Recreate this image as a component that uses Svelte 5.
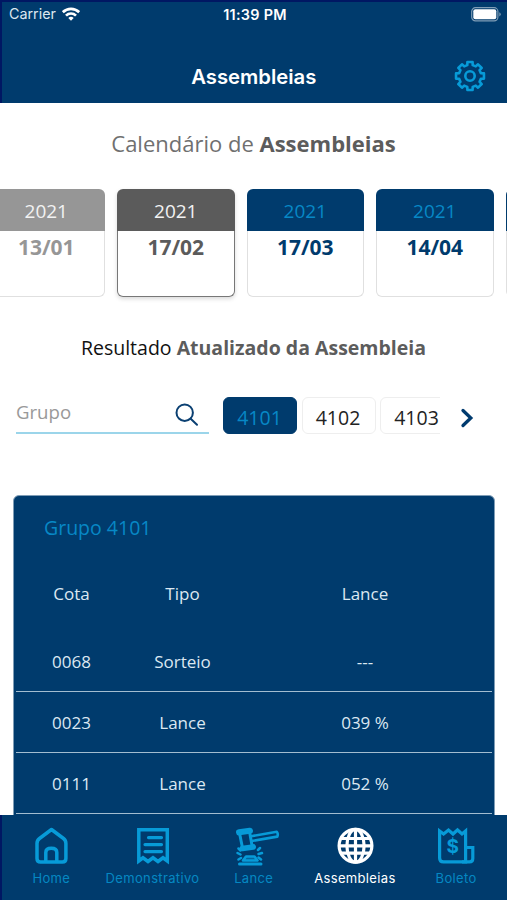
<script lang="ts">
  type Meeting = { year?: number; day?: string; state: "past" | "current" | "next" };

  // the last card only peeks in from the right edge
  const meetings: Meeting[] = [
    { year: 2021, day: "13/01", state: "past" },
    { year: 2021, day: "17/02", state: "current" },
    { year: 2021, day: "17/03", state: "next" },
    { year: 2021, day: "14/04", state: "next" },
    { state: "next" },
  ];

  const groups = ["4101", "4102", "4103"];

  const results = [
    { cota: "0068", tipo: "Sorteio", lance: "---" },
    { cota: "0023", tipo: "Lance", lance: "039 %" },
    { cota: "0111", tipo: "Lance", lance: "052 %" },
  ];

  const tabs = ["Home", "Demonstrativo", "Lance", "Assembleias", "Boleto"];

  let activeGroup = $state("4101");
  let activeTab = $state("Assembleias");
  let search = $state("");

  // eight-toothed gear outline around 0,0
  function gearPath() {
    const pts: string[] = [];
    for (let i = 0; i < 8; i++) {
      const steps = [[-14, 11.2], [-10.5, 14.2], [10.5, 14.2], [14, 11.2]];
      for (const [deg, r] of steps) {
        const a = ((i * 45 + deg) * Math.PI) / 180;
        pts.push(`${(Math.sin(a) * r).toFixed(2)} ${(-Math.cos(a) * r).toFixed(2)}`);
      }
    }
    return `M${pts.join("L")}Z`;
  }
</script>

<div class="screen">
  <header class="header">
    <div class="status">
      <span class="carrier">
        Carrier
        <svg width="18" height="14" viewBox="0 0 18 14" fill="none" stroke="#fff" stroke-width="2.7">
          <path d="M.8 5.200C5.500 .7 12.500 .7 17.200 5.200" />
          <path d="M4 8.600C6.800 5.800 11.200 5.800 14 8.600" />
          <path d="M6.300 10.900C7.900 9.400 10.100 9.400 11.700 10.900L9 13.700Z" fill="#fff" stroke="none" />
        </svg>
      </span>
      <span class="time">11:39 PM</span>
      <span class="battery">
        <svg width="30" height="15" viewBox="0 0 30 15">
          <rect x=".7" y=".7" width="26.200" height="13.200" rx="3.800" fill="none" stroke="#7f9db6" stroke-width="1.200" />
          <rect x="2.300" y="2.300" width="23" height="10" rx="2" fill="#fff" />
          <path d="M28.300 5.200v4.200q1.400-.7 1.400-2.100t-1.400-2.100Z" fill="#7f9db6" />
        </svg>
      </span>
    </div>
    <div class="title-bar">
      <h1>Assembleias</h1>
      <button class="settings" aria-label="Configurações">
        <svg width="32" height="32" viewBox="-16 -16 32 32" fill="none" stroke="#079bd8" stroke-width="2.600" stroke-linejoin="round">
          <path d={gearPath()} />
          <circle r="4.700" />
        </svg>
      </button>
    </div>
  </header>

  <main>
    <h2 class="calendar-title">Calendário de <b>Assembleias</b></h2>

    <div class="calendar">
      {#each meetings as meeting}
        <div class="card {meeting.state}">
          <div class="year">{meeting.year ?? ""}</div>
          <div class="day">{meeting.day ?? ""}</div>
        </div>
      {/each}
    </div>

    <h2 class="result-title">Resultado <b>Atualizado da Assembleia</b></h2>

    <div class="filter">
      <label class="search">
        <input placeholder="Grupo" bind:value={search} />
        <svg width="24" height="24" viewBox="0 0 24 24" fill="none" stroke="#0b4072" stroke-width="2" stroke-linecap="round">
          <circle cx="9.700" cy="9.700" r="8.200" />
          <path d="M15.700 15.700l6.300 6.100" />
        </svg>
      </label>
      <div class="chips">
        {#each groups as group}
          <button class="chip" class:active={activeGroup === group} onclick={() => (activeGroup = group)}>
            {group}
          </button>
        {/each}
      </div>
      <button class="more" aria-label="Próximo">
        <svg width="14" height="20" viewBox="0 0 14 20" fill="none" stroke="#003b6f" stroke-width="3.300" stroke-linecap="round">
          <path d="M3 2.500l7.800 7.500L3 17.500" />
        </svg>
      </button>
    </div>

    <section class="panel">
      <h3>Grupo {activeGroup}</h3>
      <div class="row head">
        <span>Cota</span><span>Tipo</span><span>Lance</span>
      </div>
      {#each results as result}
        <div class="row">
          <span>{result.cota}</span><span>{result.tipo}</span><span>{result.lance}</span>
        </div>
      {/each}
    </section>
  </main>

  <nav class="tabs">
    {#each tabs as tab}
      <button class="tab" class:active={activeTab === tab} onclick={() => (activeTab = tab)}>
        {#if tab === "Home"}
          <svg width="46" height="38" viewBox="0 0 46 38" fill="none" stroke="currentColor" stroke-width="3.500" stroke-linejoin="round">
            <path d="M23.500 2.500L35.500 11.500Q37.900 13.300 37.900 16.500V31.500Q37.900 35 34.400 35H12.500Q9 35 9 31.500V16.500Q9 13.300 11.500 11.500Z" />
            <path d="M17.800 35V25.500Q17.800 21.300 23.300 21.300T28.800 25.500V35" />
          </svg>
        {:else if tab === "Demonstrativo"}
          <svg width="46" height="38" viewBox="0 0 46 38" fill="none" stroke="currentColor" stroke-width="3.500">
            <path d="M8.800 2.700H37.300V34L33 30.800L28 34.500L23 30.800L18 34.500L13 30.800L8.800 34Z" />
            <path d="M18.500 10.600H31.500M15 17.600H31.500M15 24.600H31.500" stroke-linecap="round" stroke-width="3.200" />
          </svg>
        {:else if tab === "Lance"}
          <svg width="46" height="38" viewBox="0 0 46 38" fill="none" stroke="currentColor" stroke-width="2.600" stroke-linejoin="round" stroke-linecap="round">
            <rect x="6.300" y="2.800" width="14.500" height="3.600" rx="1.800" transform="rotate(-8 13 5)" fill="currentColor" />
            <path d="M8.800 7.500L11.300 20M18.800 6L21 18.500" stroke-width="3" />
            <rect x="9.800" y="19.300" width="14" height="3" rx="1.500" transform="rotate(-8 16 21)" fill="currentColor" />
            <path d="M20 9.300L45.800 4.800Q47.500 7 46.300 9.600L20.800 14" />
            <path d="M8.500 37H30" stroke-width="3" />
            <path d="M12 33.500L15 29.500H23.500L26.500 33.500Z" fill="currentColor" fill-opacity=".45" />
            <path d="M7.500 21.500L9.500 23.500M6.500 26L9.500 27.500M7.500 32.500L10 31M27 23L29 21M27.500 27L31 26M27.500 30.500L30 32.500" stroke-width="2.500" />
          </svg>
        {:else if tab === "Assembleias"}
          <svg width="46" height="38" viewBox="0 0 46 38" fill="none" stroke="currentColor" stroke-width="3.200">
            <circle cx="23.500" cy="18.800" r="16.400" />
            <ellipse cx="23.500" cy="18.800" rx="8.600" ry="16.400" />
            <path d="M23.500 2.400V35.200M7 18.800H40M9.500 11.500H37.500M9.500 26.100H37.500" />
          </svg>
        {:else}
          <svg width="46" height="38" viewBox="0 0 46 38" fill="none" stroke="currentColor" stroke-width="3.200">
            <path d="M6.600 4L10.600 7L15.500 3L20 7L24.500 3L29 7L32.600 4V34.900H10.500Q6.600 34.900 6.600 31Z" />
            <path d="M32.600 20.500H39.800V31.500Q39.800 34.900 36.500 34.900H29" />
            <text x="19.800" y="25.600" class="money">$</text>
          </svg>
        {/if}
        <span>{tab}</span>
      </button>
    {/each}
  </nav>
</div>

<style>
  :global(body) {
    margin: 0;
    overflow: hidden;
  }

  .screen {
    display: flex;
    flex-direction: column;
    width: 507px;
    height: 900px;
    overflow: hidden;
    background: #fff;
    font-family: "Open Sans", sans-serif;
  }

  button {
    border: none;
    background: none;
    padding: 0;
    font-family: inherit;
    cursor: pointer;
  }

  svg {
    display: block;
  }

  h1,
  h2,
  h3 {
    margin: 0;
    font-weight: 400;
  }

  .header {
    box-sizing: border-box;
    height: 103px;
    flex: none;
    padding-top: 2px;
    background: #003b6d;
    box-shadow: inset 2px 2px #001763;
    color: #fff;
    font-family: Inter, sans-serif;
  }

  .status {
    display: grid;
    grid-template-columns: 1fr auto 1fr;
    align-items: center;
    height: 24px;
    padding: 0 6px 0 9px;
  }

  .carrier {
    display: flex;
    align-items: center;
    gap: 6px;
    margin-top: -1px;
    color: #dce7f0;
    font-size: 14.3px;
  }

  .time {
    font-weight: 600;
    font-size: 14.4px;
    letter-spacing: 0.3px;
  }

  .battery {
    justify-self: end;
  }

  .title-bar {
    display: grid;
    grid-template-columns: 1fr auto 1fr;
    align-items: center;
    height: 52px;
    margin-top: 24px;
    padding: 0 21.5px 0 22px;
  }

  .title-bar h1 {
    grid-column: 2;
    font-size: 20.3px;
    font-weight: 600;
  }

  .settings {
    justify-self: end;
  }

  main {
    flex: 1;
    min-height: 0;
    overflow: hidden;
  }

  .calendar-title,
  .result-title {
    text-align: center;
    white-space: nowrap;
  }

  .calendar-title {
    padding-top: 25px;
    line-height: 30px;
    font-size: 22px;
    color: #707070;
  }

  .calendar-title b,
  .result-title b {
    color: #5c5c5c;
  }

  .calendar {
    display: flex;
    gap: 12px;
    margin: 31px 0 0 -12.5px;
  }

  .card {
    flex: none;
    width: 117.5px;
    height: 108px;
    border-radius: 6px;
    text-align: center;
  }

  .year {
    height: 42px;
    border-radius: 6px 6px 0 0;
    background: #003b6d;
    line-height: 44px;
    font-size: 19px;
    color: #0788c6;
  }

  .day {
    box-sizing: border-box;
    height: 66px;
    border: 1.5px solid #e0e0e0;
    border-top: none;
    border-radius: 0 0 6px 6px;
    line-height: 32px;
    font-size: 21px;
    font-weight: 700;
    color: #003b6d;
  }

  .past .year {
    background: #969696;
  }

  .past .day {
    color: #969696;
  }

  .card.current {
    box-shadow: 0 2px 4px rgba(0, 0, 0, 0.15);
  }

  .current .year {
    background: #5b5b5b;
  }

  .current .day {
    border-color: #777;
    color: #5b5b5b;
  }

  .past .year,
  .current .year {
    color: #f2f2f2;
  }

  .result-title {
    margin-top: 36px;
    line-height: 30px;
    font-size: 19.5px;
    color: #111;
  }

  .filter {
    display: flex;
    height: 38px;
    margin: 33px 0 0 16px;
  }

  .search {
    box-sizing: border-box;
    display: flex;
    align-items: center;
    width: 193px;
    padding-right: 10px;
    border-bottom: 2px solid #9bd5ea;
  }

  .search svg {
    margin-top: 2px;
  }

  .search input {
    flex: 1;
    min-width: 0;
    margin-top: -5px;
    border: none;
    outline: none;
    padding: 0;
    font-family: inherit;
    font-size: 18.6px;
  }

  .search input::placeholder {
    color: #999;
  }

  .chips {
    display: flex;
    gap: 4.5px;
    width: 217px;
    margin-left: 14px;
    overflow: hidden;
  }

  .chip {
    box-sizing: border-box;
    flex: none;
    width: 74px;
    height: 37px;
    margin-top: 0.5px;
    padding: 4px 1px 0 0;
    border: 1.5px solid #eee;
    border-radius: 6px;
    font-size: 19.5px;
    color: #222;
  }

  .chip.active {
    border-color: #003b6d;
    background: #003b6d;
    color: #0788c6;
  }

  .more {
    margin: 5px 0 0 20px;
  }

  .panel {
    box-sizing: border-box;
    margin: 61px 12px 0 13px;
    height: 400px;
    padding: 16px 2px 0;
    border: 1px solid #7f9db6;
    border-radius: 6px;
    background: #003b6d;
  }

  .panel h3 {
    padding-left: 28px;
    line-height: 32px;
    font-size: 19.5px;
    color: #0788c6;
  }

  .row {
    box-sizing: border-box;
    display: grid;
    grid-template-columns: 111px 111px 1fr;
    align-items: center;
    height: 61px;
    border-bottom: 1px solid #a3bdd0;
    font-size: 17px;
    color: #dce8f2;
    text-align: center;
  }

  .row.head {
    height: 87px;
    padding-top: 12px;
    border-bottom: none;
  }

  .tabs {
    box-sizing: border-box;
    display: grid;
    grid-template-columns: repeat(5, 101.2px);
    flex: none;
    height: 85px;
    background: #003b6d;
    box-shadow: inset 2px 0 #001763;
    font-family: Inter, sans-serif;
  }

  .tab {
    display: flex;
    flex-direction: column;
    align-items: center;
    gap: 5px;
    padding: 12px 0 0 1.5px;
    font-size: 13px;
    color: #079bd8;
  }

  .tab svg {
    overflow: visible;
  }

  .tab span {
    letter-spacing: 0.35px;
    opacity: 0.8;
  }

  .tab.active {
    color: #fff;
  }

  .tab.active span {
    opacity: 1;
  }

  .money {
    fill: currentColor;
    stroke: none;
    font-size: 19px;
    font-weight: 700;
    text-anchor: middle;
  }
</style>
